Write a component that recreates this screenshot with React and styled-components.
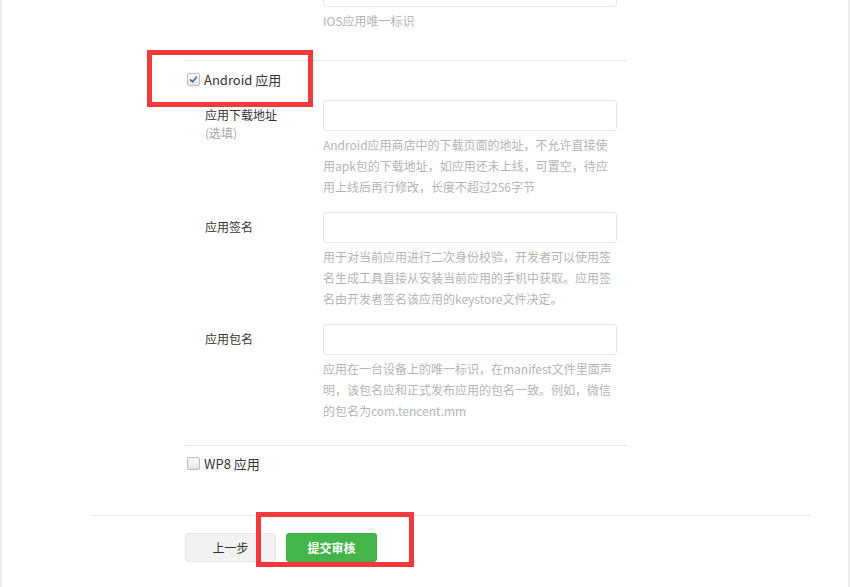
import React from "react";
import styled, { createGlobalStyle } from "styled-components";

const GlobalStyle = createGlobalStyle`
  html, body {
    margin: 0;
    padding: 0;
    background: #fff;
  }
  body {
    font-family: "Noto Sans CJK SC", "Noto Sans", sans-serif;
    color: #353535;
  }
`;

const Page = styled.div`
  position: relative;
  width: 850px;
  height: 587px;
  box-sizing: border-box;
  overflow: hidden;
  border-left: 2px solid #ececec;
  border-right: 2px solid #ececec;
  background: #fff;
`;

const Form = styled.div`
  margin-top: -24px;
  margin-left: 183px;
  width: 442px;
`;

const Section = styled.div`
  border-top: ${(p) => (p.$divided ? "1px solid #e7e7e7" : "none")};
  padding-bottom: ${(p) => p.$pb || 0}px;
`;

const Field = styled.div`
  display: grid;
  grid-template-columns: 138px 294px;
  margin-top: ${(p) => p.$mt || 0}px;
`;

const LabelCol = styled.div`
  padding-left: 20px;
`;

const Label = styled.div`
  font-size: 12px;
  line-height: 20px;
  padding-top: 5px;
  color: #353535;
`;

const SubLabel = styled.div`
  font-size: 12px;
  line-height: 16px;
  color: #a8a8a8;
`;

const Input = styled.div`
  height: 31px;
  box-sizing: border-box;
  border: 1px solid #e5e5e5;
  border-radius: 3px;
  background: #fff;
`;

const Help = styled.div`
  margin-top: 3px;
  font-size: 12px;
  line-height: 21px;
  color: #b4b4b4;
  white-space: nowrap;
`;

const CheckRow = styled.label`
  display: flex;
  align-items: center;
  gap: 4px;
  height: 20px;
  margin-top: ${(p) => p.$mt || 0}px;
  margin-left: 2px;
  font-size: 13px;
  color: #353535;
`;

const Box = styled.span`
  width: 13px;
  height: 13px;
  box-sizing: border-box;
  border: 1px solid #bcbcbc;
  border-radius: 2px;
  background: linear-gradient(#fdfdfd, #e4e4e4);
  display: flex;
  align-items: center;
  justify-content: center;
`;

const Footer = styled.div`
  margin: 0 37px 0 89px;
  border-top: 1px solid #e7e7e7;
  padding: 17px 0 0 94px;
  display: flex;
  gap: 10px;
  margin-top: ${(p) => p.$mt}px;
`;

const Button = styled.div`
  width: 91px;
  height: 29px;
  box-sizing: border-box;
  border-radius: 3px;
  display: flex;
  align-items: center;
  justify-content: center;
  font-size: 12px;
  font-weight: ${(p) => (p.$primary ? 700 : 400)};
  color: ${(p) => (p.$primary ? "#fff" : "#353535")};
  background: ${(p) => (p.$primary ? "#44b549" : "#f2f2f2")};
  border: 1px solid ${(p) => (p.$primary ? "#42ac47" : "#e6e6e6")};
`;

const Highlight = styled.div`
  position: absolute;
  box-sizing: border-box;
  border: 5px solid #f23a3c;
  left: ${(p) => p.$x}px;
  top: ${(p) => p.$y}px;
  width: ${(p) => p.$w}px;
  height: ${(p) => p.$h}px;
`;

const Check = ({ checked }) => (
  <Box>
    {checked && (
      <svg width="9" height="9" viewBox="0 0 9 9">
        <path d="M1.5 4.8 L3.6 6.8 L7.6 2" fill="none" stroke="#2f6db5" strokeWidth="1.6" strokeLinecap="round" strokeLinejoin="round" />
      </svg>
    )}
  </Box>
);

const HelpText = ({ lines }) => (
  <Help>
    {lines.map((l, i) => (
      <div key={i}>{l}</div>
    ))}
  </Help>
);

const fields = [
  {
    label: "应用下载地址",
    sub: "(选填)",
    help: [
      "Android应用商店中的下载页面的地址，不允许直接使",
      "用apk包的下载地址，如应用还未上线，可置空，待应",
      "用上线后再行修改，长度不超过256字节",
    ],
  },
  {
    label: "应用签名",
    help: [
      "用于对当前应用进行二次身份校验，开发者可以使用签",
      "名生成工具直接从安装当前应用的手机中获取。应用签",
      "名由开发者签名该应用的keystore文件决定。",
    ],
  },
  {
    label: "应用包名",
    help: [
      "应用在一台设备上的唯一标识，在manifest文件里面声",
      "明，该包名应和正式发布应用的包名一致。例如，微信",
      "的包名为com.tencent.mm",
    ],
  },
];

export default function App() {
  return (
    <>
      <GlobalStyle />
      <Page>
        <Form>
          <Section $pb={29}>
            <Field>
              <LabelCol />
              <div>
                <Input />
                <HelpText lines={["IOS应用唯一标识"]} />
              </div>
            </Field>
          </Section>
          <Section $divided $pb={24}>
            <CheckRow $mt={8}>
              <Check checked />
              Android 应用
            </CheckRow>
            {fields.map((f, i) => (
              <Field key={f.label} $mt={i === 0 ? 11 : 15}>
                <LabelCol>
                  <Label>{f.label}</Label>
                  {f.sub && <SubLabel>{f.sub}</SubLabel>}
                </LabelCol>
                <div>
                  <Input />
                  <HelpText lines={f.help} />
                </div>
              </Field>
            ))}
          </Section>
          <Section $divided>
            <CheckRow $mt={7}>
              <Check />
              WP8 应用
            </CheckRow>
          </Section>
        </Form>
        <Footer $mt={42}>
          <Button>上一步</Button>
          <Button $primary>提交审核</Button>
        </Footer>
        <Highlight $x={145} $y={50} $w={166} $h={57} />
        <Highlight $x={254} $y={512} $w={158} $h={55} />
      </Page>
    </>
  );
}
